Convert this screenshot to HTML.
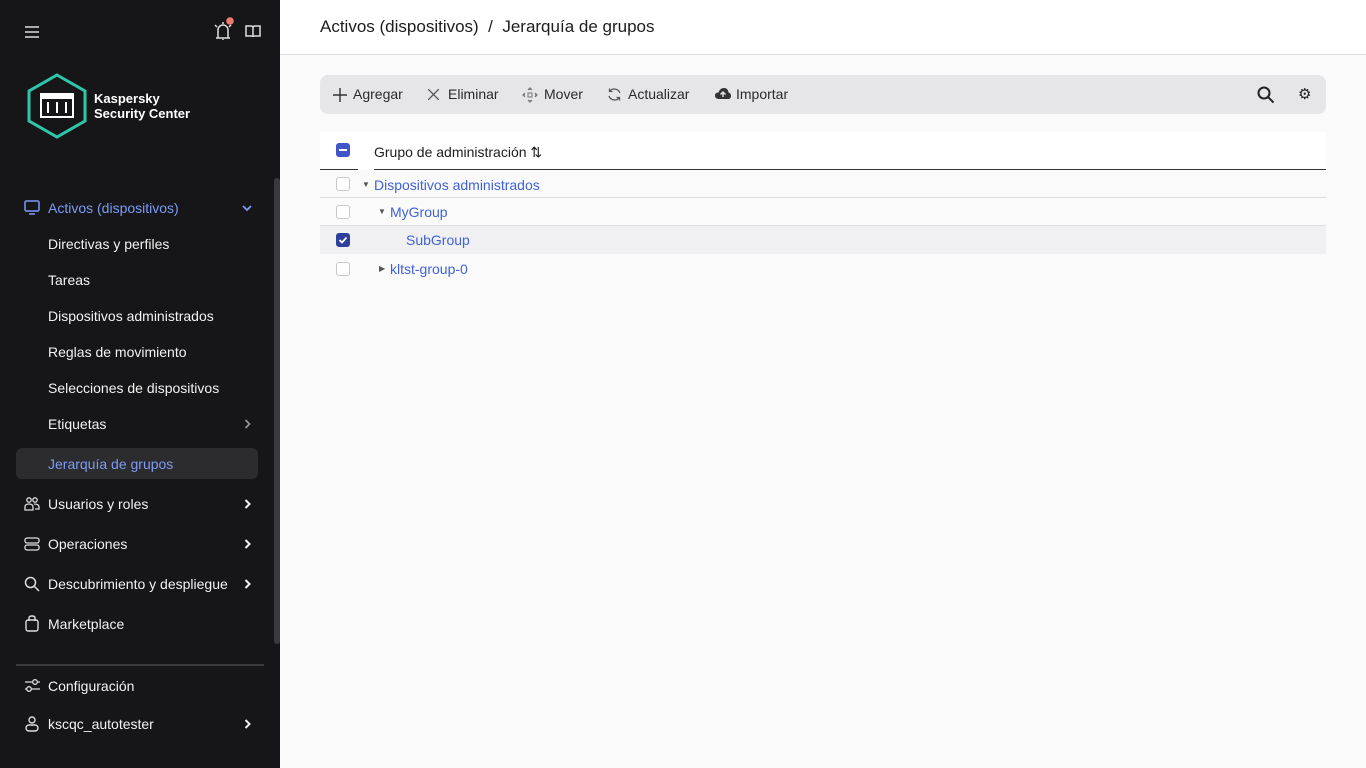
<!DOCTYPE html>
<html><head><meta charset="utf-8"><style>
*{box-sizing:border-box;margin:0;padding:0}
body{width:1366px;height:768px;overflow:hidden;font-family:"Liberation Sans",sans-serif;background:#fafafa;position:relative}
#sb{position:absolute;left:0;top:0;width:280px;height:768px;background:#161618;color:#fff}
.it{position:absolute;left:48px;font-size:14px;color:#f2f2f2;white-space:nowrap}
.ic{position:absolute;left:24px}
.chev{position:absolute;left:244px}
#main{position:absolute;left:280px;top:0;right:0;bottom:0}
.hdr{position:absolute;left:0;right:0;top:0;height:55px;background:#fff;border-bottom:1px solid #dcdcde}
.hdr span{position:absolute;left:40px;top:17px;font-size:17px;color:#1d1d1f}
.tb{position:absolute;left:40px;top:75px;width:1006px;height:39px;background:#e6e6e8;border-radius:8px;font-size:14px;color:#2a2a2c}
.tb span{position:absolute;top:11px}
.row{position:absolute;left:40px;width:1006px;height:28px;font-size:14px;color:#3f62d9}
.cb{position:absolute;left:16px;top:7px;width:14px;height:14px;border:1px solid #c8c8cc;border-radius:3px;background:#fff}
</style></head><body>
<div id="sb">
<svg class="ic" style="left:25px;top:26px" width="14" height="12"><path d="M0 1H14M0 6H14M0 11H14" stroke="#ddd" stroke-width="1.6"/></svg>
<svg style="position:absolute;left:213px;top:16px" width="22" height="24"><path d="M3 22H17M5 22V14a5 5 0 0 1 10 0V22M10 23v1M2 9L4 11M18 9L16 11M10 6V8" stroke="#ddd" stroke-width="1.5" fill="none"/><circle cx="17" cy="5" r="3.8" fill="#f07b72"/></svg>
<svg style="position:absolute;left:245px;top:25px" width="16" height="13"><path d="M1 1H6Q8 1 8 3V12Q8 11 6 11H1ZM15 1H10Q8 1 8 3V12Q8 11 10 11H15Z" stroke="#ddd" stroke-width="1.5" fill="none"/></svg>
<svg style="position:absolute;left:26px;top:73px" width="62" height="66"><polygon points="31,2 59,18 59,48 31,64 3,48 3,18" fill="none" stroke="#2ec6a8" stroke-width="3"/><rect x="14" y="20" width="34" height="25" fill="#fff"/><rect x="16" y="26" width="30" height="17" fill="#161618"/><path d="M22 29V40M31 29V40M40 29V40" stroke="#fff" stroke-width="2"/></svg>
<div style="position:absolute;left:94px;top:91px;font-size:13px;font-weight:bold;line-height:15px">Kaspersky<br>Security Center</div>
<div style="position:absolute;left:274px;top:178px;width:6px;height:466px;background:#3a3a3c;border-radius:3px"></div>
<svg class="ic" style="top:200px" width="16" height="15"><rect x="1" y="1" width="14" height="10" rx="1.5" fill="none" stroke="#7d9bf5" stroke-width="1.5"/><path d="M5 14H11" stroke="#7d9bf5" stroke-width="1.5"/></svg>
<div class="it" style="top:200px;color:#7d9bf5">Activos (dispositivos)</div>
<svg class="chev" style="left:242px;top:205px" width="10" height="7"><path d="M1 1L5 5L9 1" stroke="#7d9bf5" stroke-width="1.8" fill="none"/></svg>
<div class="it" style="top:236px">Directivas y perfiles</div>
<div class="it" style="top:272px">Tareas</div>
<div class="it" style="top:308px">Dispositivos administrados</div>
<div class="it" style="top:344px">Reglas de movimiento</div>
<div class="it" style="top:380px">Selecciones de dispositivos</div>
<div class="it" style="top:416px">Etiquetas</div><svg class="chev" style="top:419px" width="7" height="10"><path d="M1.5 1L5.5 5L1.5 9" stroke="#999" stroke-width="1.6" fill="none"/></svg>
<div style="position:absolute;left:16px;top:448px;width:242px;height:31px;background:#2c2c2e;border-radius:6px"></div>
<div class="it" style="top:456px;color:#7d9bf5">Jerarquía de grupos</div>
<div class="it" style="top:496px">Usuarios y roles</div><svg class="chev" style="top:499px" width="7" height="10"><path d="M1.5 1L5.5 5L1.5 9" stroke="#eee" stroke-width="2" fill="none"/></svg>
<svg class="ic" style="top:497px" width="16" height="14"><circle cx="5" cy="3" r="2.2" fill="none" stroke="#ddd" stroke-width="1.3"/><circle cx="11" cy="3" r="2.2" fill="none" stroke="#ddd" stroke-width="1.3"/><path d="M1 13V10Q1 7 5 7Q9 7 9 10V13ZM10 7Q15 7 15 10V12H11" fill="none" stroke="#ddd" stroke-width="1.3"/></svg>
<div class="it" style="top:536px">Operaciones</div><svg class="chev" style="top:539px" width="7" height="10"><path d="M1.5 1L5.5 5L1.5 9" stroke="#eee" stroke-width="2" fill="none"/></svg>
<svg class="ic" style="top:537px" width="16" height="14"><rect x="1" y="1" width="14" height="5" rx="2" fill="none" stroke="#ddd" stroke-width="1.3"/><rect x="1" y="8" width="14" height="5" rx="2" fill="none" stroke="#ddd" stroke-width="1.3"/></svg>
<div class="it" style="top:576px">Descubrimiento y despliegue</div><svg class="chev" style="top:579px" width="7" height="10"><path d="M1.5 1L5.5 5L1.5 9" stroke="#eee" stroke-width="2" fill="none"/></svg>
<svg class="ic" style="top:576px" width="16" height="16"><circle cx="6.5" cy="6.5" r="5" fill="none" stroke="#ddd" stroke-width="1.5"/><path d="M10 10L15 15" stroke="#ddd" stroke-width="1.5"/></svg>
<div class="it" style="top:616px">Marketplace</div>
<svg class="ic" style="top:615px" width="16" height="17"><rect x="2" y="5" width="12" height="11" rx="2" fill="none" stroke="#ddd" stroke-width="1.4"/><path d="M5 6V3Q5 1 8 1Q11 1 11 3V6" fill="none" stroke="#ddd" stroke-width="1.4"/></svg>
<div style="position:absolute;left:16px;top:664px;width:248px;height:2px;background:#3a3a3c"></div>
<div class="it" style="top:678px">Configuración</div>
<svg class="ic" style="top:678px" width="16" height="15"><path d="M1 4H16M1 11H16" stroke="#ddd" stroke-width="1.3"/><circle cx="11" cy="4" r="2.3" fill="#161618" stroke="#ddd" stroke-width="1.3"/><circle cx="5" cy="11" r="2.3" fill="#161618" stroke="#ddd" stroke-width="1.3"/></svg>
<div class="it" style="top:716px">kscqc_autotester</div><svg class="chev" style="top:719px" width="7" height="10"><path d="M1.5 1L5.5 5L1.5 9" stroke="#eee" stroke-width="2" fill="none"/></svg>
<svg class="ic" style="top:716px" width="16" height="16"><circle cx="8" cy="4" r="3" fill="none" stroke="#ddd" stroke-width="1.4"/><rect x="2" y="9" width="12" height="6" rx="3" fill="none" stroke="#ddd" stroke-width="1.4"/></svg>
</div>
<div id="main">
<div class="hdr"><span>Activos (dispositivos) &nbsp;/&nbsp; Jerarquía de grupos</span></div>
<div class="tb">
<svg style="position:absolute;left:13px;top:13px" width="14" height="14"><path d="M7 0V14M0 7H14" stroke="#333" stroke-width="1.4"/></svg><span style="left:33px">Agregar</span>
<svg style="position:absolute;left:108px;top:14px" width="11" height="11"><path d="M0 0L11 11M11 0L0 11" stroke="#555" stroke-width="1.3"/></svg><span style="left:128px">Eliminar</span>
<svg style="position:absolute;left:202px;top:12px" width="16" height="16"><path d="M8 1V3M8 13V15M1 8H3M13 8H15M6 3L8 1L10 3M6 13L8 15L10 13M3 6L1 8L3 10M13 6L15 8L13 10" stroke="#777" stroke-width="1.2" fill="none"/><rect x="6" y="6" width="4" height="4" fill="none" stroke="#777"/></svg><span style="left:224px">Mover</span>
<svg style="position:absolute;left:287px;top:12px" width="15" height="15"><path d="M13 6A6 6 0 0 0 2.5 4.5M2 9A6 6 0 0 0 12.5 10.5M2.5 1.5V4.5H5.5M12.5 13.5V10.5H9.5" stroke="#555" stroke-width="1.3" fill="none"/></svg><span style="left:308px">Actualizar</span>
<svg style="position:absolute;left:395px;top:13px" width="16" height="12"><path d="M4 11Q0 11 0 7.5Q0 4.5 3.5 4.5Q5 0 9 0Q13 0 13.5 4.5Q16 5 16 8Q16 11 13 11Z" fill="#333"/><path d="M8 9V4M5.5 6.5L8 4L10.5 6.5" stroke="#e6e6e8" stroke-width="1.4" fill="none"/></svg>
<span style="left:416px">Importar</span>
<svg style="position:absolute;left:937px;top:11px" width="18" height="18"><circle cx="7" cy="7" r="5.5" fill="none" stroke="#222" stroke-width="2"/><path d="M11 11L16.5 16.5" stroke="#222" stroke-width="2"/></svg>
<span style="left:978px;top:10px;font-size:15px;color:#222">⚙</span>
</div>
<div style="position:absolute;left:40px;top:132px;width:1006px;height:38px;background:#fff"></div>
<div style="position:absolute;left:56px;top:143px;width:14px;height:14px;background:#3f55c8;border-radius:3px"><div style="position:absolute;left:3px;top:6px;width:8px;height:2px;background:#fff"></div></div>
<div style="position:absolute;left:94px;top:144px;font-size:14px;color:#1d1d1f">Grupo de administración ⇅</div>
<div style="position:absolute;left:40px;top:169px;width:38px;height:1px;background:#333"></div>
<div style="position:absolute;left:94px;top:169px;width:952px;height:1px;background:#333"></div>
<div class="row" style="top:170px;border-bottom:1px solid #dedee0"><div class="cb"></div><span style="position:absolute;left:42px;top:10px;font-size:8px;color:#555">▼</span><span style="position:absolute;left:54px;top:7px">Dispositivos administrados</span></div>
<div class="row" style="top:198px;border-bottom:1px solid #dedee0"><div class="cb"></div><span style="position:absolute;left:58px;top:9px;font-size:8px;color:#555">▼</span><span style="position:absolute;left:70px;top:6px">MyGroup</span></div>
<div class="row" style="top:226px;background:#f0f0f2"><div class="cb" style="background:#2e3f9e;border-color:#2e3f9e"><svg width="12" height="12" style="position:absolute;left:0;top:0"><path d="M2.5 6L5 8.5L9.5 3.5" stroke="#fff" stroke-width="1.8" fill="none"/></svg></div><span style="position:absolute;left:86px;top:6px">SubGroup</span></div>
<div class="row" style="top:255px"><div class="cb"></div><span style="position:absolute;left:59px;top:9px;font-size:8px;color:#555">▶</span><span style="position:absolute;left:70px;top:6px">kltst-group-0</span></div>
</div>
</body></html>
